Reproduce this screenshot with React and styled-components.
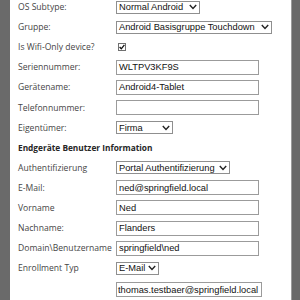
import React from 'react';
import styled, { createGlobalStyle } from 'styled-components';

const GlobalStyle = createGlobalStyle`
  html, body {
    margin: 0;
    padding: 0;
    background: #ffffff;
  }
  body {
    width: 300px;
    height: 300px;
    overflow: hidden;
  }
`;

const Page = styled.div`
  display: flex;
  width: 300px;
  height: 300px;
  overflow: hidden;
`;

const SideBar = styled.div`
  flex: 0 0 ${(p) => p.w}px;
  background: #6a6a6a;
  border-left: ${(p) => (p.edge ? '1px solid #9c9c9c' : 'none')};
`;

const Content = styled.div`
  flex: 1;
  padding-left: 8px;
  overflow: hidden;
`;

const Form = styled.div`
  display: grid;
  grid-template-columns: 98px 1fr;
  grid-auto-rows: 20.1px;
  margin-top: -3px;
`;

const Label = styled.div`
  display: flex;
  align-items: center;
  font-family: "Open Sans", "Noto Sans", sans-serif;
  font-size: 8.6px;
  color: #454545;
  white-space: nowrap;
`;

const Heading = styled.div`
  grid-column: 1 / 3;
  display: flex;
  align-items: center;
  font-family: "Open Sans", "Noto Sans", sans-serif;
  font-weight: 700;
  font-size: 8.3px;
  color: #262626;
  white-space: nowrap;
`;

const Cell = styled.div`
  display: flex;
  align-items: center;
  margin-top: ${(p) => p.shift || 0}px;
`;

const TextBox = styled.div`
  box-sizing: border-box;
  width: ${(p) => p.w || 143}px;
  height: 15px;
  border: 1px solid #9b9b9b;
  padding: 0 ${(p) => p.pad ?? 2}px;
  display: flex;
  align-items: center;
  font-family: "Liberation Sans", Arial, sans-serif;
  font-size: 9.3px;
  color: #111;
  white-space: nowrap;
  overflow: hidden;
`;

const SelectBox = styled.div`
  box-sizing: border-box;
  width: ${(p) => p.w}px;
  height: 13px;
  border: 1px solid #8f8f8f;
  padding: 0 2px 0 2px;
  display: flex;
  align-items: center;
  justify-content: space-between;
  gap: 3px;
  font-family: "Liberation Sans", Arial, sans-serif;
  font-size: 9.3px;
  color: #111;
  white-space: nowrap;
  overflow: hidden;
`;

const Check = styled.div`
  box-sizing: border-box;
  width: 8px;
  height: 8px;
  margin-left: 2px;
  border: 1px solid #707070;
  display: flex;
  align-items: center;
  justify-content: center;
`;

const Chevron = () => (
  <svg width="8" height="6" viewBox="0 0 8 6" style={{ flexShrink: 0 }}>
    <path d="M0.8 1 L4 4.4 L7.2 1" fill="none" stroke="#222" strokeWidth="1.4" />
  </svg>
);

const Select = ({ w, children }) => (
  <SelectBox w={w}>
    <span>{children}</span>
    <Chevron />
  </SelectBox>
);

export default function App() {
  return (
    <>
      <GlobalStyle />
      <Page>
        <SideBar w={10} />
        <Content>
          <Form>
            <Label>OS Subtype:</Label>
            <Cell><Select w={84}>Normal Android</Select></Cell>

            <Label>Gruppe:</Label>
            <Cell><Select w={156}>Android Basisgruppe Touchdown</Select></Cell>

            <Label>Is Wifi-Only device?</Label>
            <Cell>
              <Check>
                <svg width="6" height="6" viewBox="0 0 6 6">
                  <path d="M0.6 3 L2.3 4.8 L5.4 0.8" fill="none" stroke="#111" strokeWidth="1.3" />
                </svg>
              </Check>
            </Cell>

            <Label>Seriennummer:</Label>
            <Cell><TextBox>WLTPV3KF9S</TextBox></Cell>

            <Label>Gerätename:</Label>
            <Cell><TextBox>Android4-Tablet</TextBox></Cell>

            <Label>Telefonnummer:</Label>
            <Cell><TextBox /></Cell>

            <Label>Eigentümer:</Label>
            <Cell><Select w={57}>Firma</Select></Cell>

            <Heading>Endgeräte Benutzer Information</Heading>

            <Label>Authentifizierung</Label>
            <Cell><Select w={114}>Portal Authentifizierung</Select></Cell>

            <Label>E-Mail:</Label>
            <Cell><TextBox>ned@springfield.local</TextBox></Cell>

            <Label>Vorname</Label>
            <Cell><TextBox>Ned</TextBox></Cell>

            <Label>Nachname:</Label>
            <Cell><TextBox>Flanders</TextBox></Cell>

            <Label>Domain\Benutzername</Label>
            <Cell><TextBox>springfield\ned</TextBox></Cell>

            <Label>Enrollment Typ</Label>
            <Cell><Select w={43}>E-Mail</Select></Cell>

            <Label />
            <Cell shift={3}><TextBox w={146} pad={1}>thomas.testbaer@springfield.local</TextBox></Cell>
          </Form>
        </Content>
        <SideBar w={8} edge />
      </Page>
    </>
  );
}
